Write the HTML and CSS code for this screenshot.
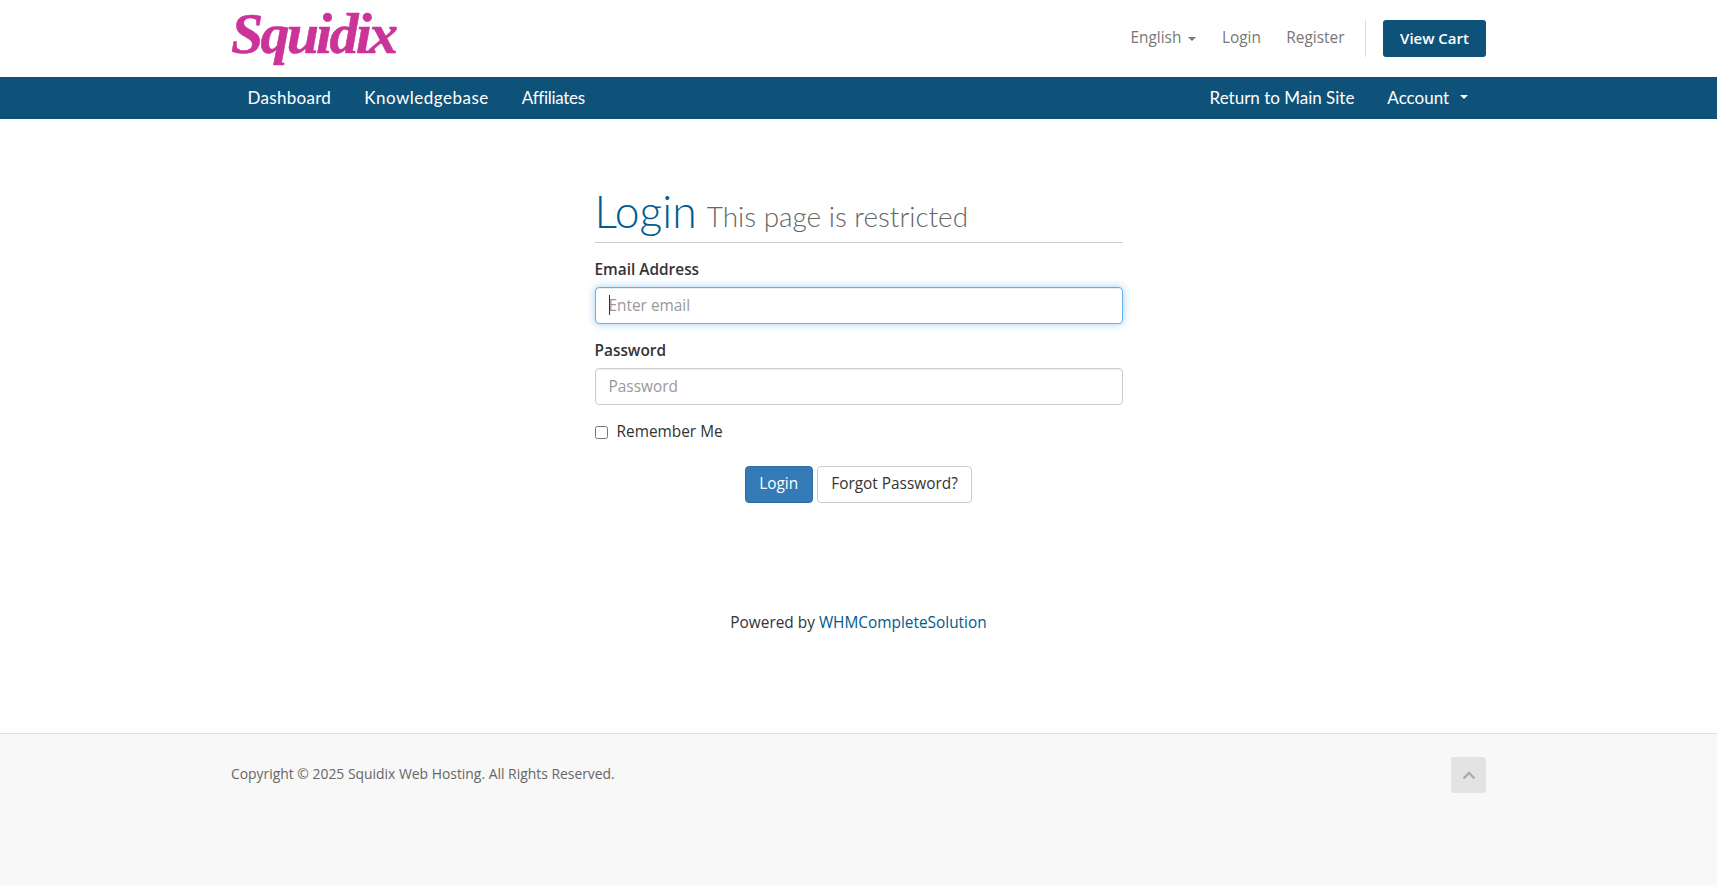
FILE: index.html
```html
<!DOCTYPE html>
<html lang="en">
<head>
<meta charset="utf-8">
<title>Login - Squidix</title>
<link rel="stylesheet" href="styles.css">
</head>
<body>
<header class="topbar">
  <div class="wrap topbar-inner">
    <a class="logo" href="#">Squidix</a>
    <div class="toplinks">
      <a class="toplink" href="#">English <span class="caret"></span></a>
      <a class="toplink" href="#">Login</a>
      <a class="toplink" href="#">Register</a>
      <span class="divider"></span>
      <a class="cart" href="#">View Cart</a>
    </div>
  </div>
</header>
<nav class="mainnav">
  <div class="wrap mainnav-inner">
    <div class="navgroup">
      <a class="navlink navlink-dash" href="#">Dashboard</a>
      <a class="navlink navlink-kb" href="#">Knowledgebase</a>
      <a class="navlink navlink-aff" href="#">Affiliates</a>
    </div>
    <div class="navgroup navgroup-right">
      <a class="navlink" href="#">Return to Main Site</a>
      <a class="navlink" href="#">Account <span class="caret caret-nav"></span></a>
    </div>
  </div>
</nav>
<main class="content">
  <form class="loginbox">
    <h1 class="title">Login <small class="subtitle">This page is restricted</small></h1>
    <div class="field">
      <label class="label" for="email">Email Address</label>
      <div class="inputwrap">
        <input class="input" id="email" type="email" placeholder="Enter email" autofocus>
        <span class="textcaret"></span>
      </div>
    </div>
    <div class="field">
      <label class="label" for="password">Password</label>
      <input class="input" id="password" type="password" placeholder="Password">
    </div>
    <label class="remember"><input class="check" type="checkbox"> Remember Me</label>
    <div class="actions">
      <button class="btn btn-primary" type="button">Login</button>
      <button class="btn btn-default" type="button">Forgot Password?</button>
    </div>
  </form>
  <p class="powered">Powered by <a href="#">WHMCompleteSolution</a></p>
</main>
<footer class="footer">
  <div class="wrap footer-inner">
    <p class="copyright">Copyright © 2025 Squidix Web Hosting. All Rights Reserved.</p>
    <a class="totop" href="#" aria-label="Back to top">
      <svg width="14" height="9" viewBox="0 0 14 9"><path d="M1.5 7.5 7 2l5.5 5.5" fill="none" stroke="#aaa" stroke-width="2.4"/></svg>
    </a>
  </div>
</footer>
</body>
</html>
```
FILE: styles.css
```css
* { box-sizing: border-box; }
html, body { margin: 0; height: 100%; }
body {
  font-family: "Open Sans", sans-serif;
  font-size: 15.4px;
  color: #333;
  background: #fff;
  display: flex;
  flex-direction: column;
  min-height: 885px;
}
a { text-decoration: none; }
.wrap { width: 1255px; margin: 0 auto; }

.topbar { height: 77px; }
.topbar-inner { display: flex; justify-content: space-between; align-items: flex-start; }
.logo {
  font-family: "Liberation Serif", serif;
  font-style: italic;
  font-weight: 700;
  font-size: 58px;
  line-height: 66px;
  letter-spacing: -2.8px;
  color: #cc3399;
  -webkit-text-stroke: 0.6px #cc3399;
  margin-top: 1px;
}
.toplinks { display: flex; align-items: center; margin-top: 20px; height: 37px; }
.toplink { color: #777; margin-right: 25.5px; padding-bottom: 2px; }
.divider { width: 1px; height: 37px; background: #ddd; margin: 0 17px 0 -5px; }
.cart {
  display: flex;
  align-items: center;
  justify-content: center;
  width: 103px;
  height: 37px;
  padding-bottom: 2px;
  background: #0f5279;
  border-radius: 3px;
  color: #fff;
  font-size: 15px;
  font-weight: 600;
}
.caret {
  display: inline-block;
  border-top: 4px solid;
  border-left: 4px solid transparent;
  border-right: 4px solid transparent;
  vertical-align: middle;
  margin-left: 3px;
}
.caret-nav { margin-left: 6px; }

.mainnav { height: 42px; background: #0f5279; }
.mainnav-inner { display: flex; justify-content: space-between; height: 100%; }
.navgroup { display: flex; }
.navgroup-right { margin-right: 2px; }
.navlink {
  display: flex;
  align-items: center;
  padding: 0 16.5px 2px;
  font-family: Lato, sans-serif;
  font-size: 17px;
  color: #fff;
  white-space: pre;
}
.navlink-dash { letter-spacing: .3px; }
.navlink-kb { letter-spacing: .5px; }
.navlink-aff { letter-spacing: -.3px; }

.content { flex: 1; display: flex; flex-direction: column; align-items: center; }
.loginbox { width: 528px; margin-top: 68px; }
.title {
  margin: 0 0 17px;
  padding-bottom: 2px;
  border-bottom: 1px solid #ccc;
  font-family: Lato, sans-serif;
  font-weight: 300;
  font-size: 44.5px;
  line-height: 47px;
  color: #005b8f;
}
.subtitle { font-size: 27.9px; font-weight: 300; color: #666; margin-left: -2px; vertical-align: 1px; }
.field { margin-bottom: 17.5px; }
.label { display: block; font-weight: 600; line-height: 20px; margin-bottom: 6.5px; }
.inputwrap { position: relative; }
.textcaret { position: absolute; left: 14px; top: 8px; width: 1px; height: 20px; background: #333; }
.input {
  display: block;
  width: 100%;
  height: 37px;
  padding: 6px 13px;
  border: 1px solid #ccc;
  border-radius: 4px;
  font-family: inherit;
  font-size: 15.4px;
  color: #555;
  caret-color: transparent;
  box-shadow: inset 0 1px 1px rgba(0,0,0,.075);
  outline: none;
}
.input::placeholder { color: #999; }
.input:focus {
  border-color: #66afe9;
  box-shadow: inset 0 1px 1px rgba(0,0,0,.075), 0 0 8px rgba(102,175,233,.6);
}
.remember { display: flex; align-items: center; line-height: 20px; margin-top: 16px; }
.check { width: 13px; height: 13px; margin: 0 9px 0 0; }
.actions { display: flex; justify-content: center; gap: 4px; margin-top: 24px; }
.btn {
  height: 37px;
  padding: 0 13.5px 2px;
  border: 1px solid;
  border-radius: 4px;
  font-family: inherit;
  font-size: 15.4px;
}
.btn-primary { background: #337ab7; border-color: #2e6da4; color: #fff; }
.btn-default { background: #fff; border-color: #ccc; color: #333; }
.powered { margin: 110px 0 0; line-height: 20px; text-align: center; }
.powered a { color: #005b8f; }

.footer { height: 152px; background: #f8f8f8; border-top: 1px solid #ddd; }
.footer-inner { display: flex; justify-content: space-between; padding-top: 23px; }
.copyright { margin: 7px 0 0; font-size: 13.9px; line-height: 20px; color: #666; }
.totop {
  display: flex;
  align-items: center;
  justify-content: center;
  width: 35px;
  height: 36px;
  background: #e3e3e3;
  border-radius: 3px;
}
```
